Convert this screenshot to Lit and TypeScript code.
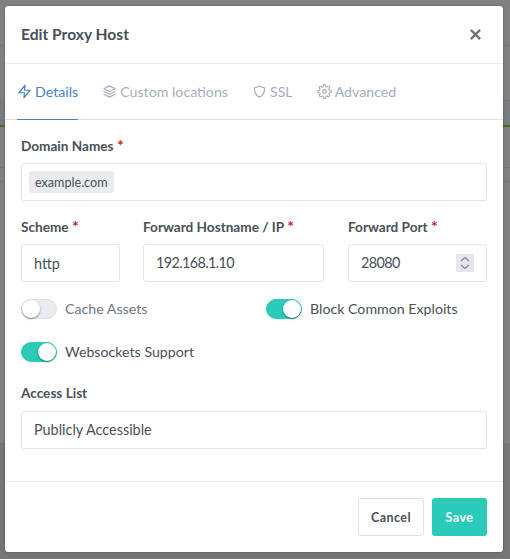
import { LitElement, html, css, svg } from "lit";
import { customElement } from "lit/decorators.js";

const ico = (p: unknown) => html`<svg class="ico" viewBox="0 0 24 24" fill="none" stroke="currentColor" stroke-width="2" stroke-linecap="round" stroke-linejoin="round">${p}</svg>`;

@customElement("app-root")
export class AppRoot extends LitElement {
  static styles = css`
    :host {
      display: block; width: 510px; height: 559px; overflow: hidden; box-sizing: border-box;
      padding: 6px 7px 7px 5px;
      font-family: "Lato", "Noto Sans", sans-serif; font-size: 14.2px; color: #495057;
      background-color: #808080;
      background-image:
        linear-gradient(#757575, #757575), linear-gradient(#757575, #757575), linear-gradient(#4a6b1c, #4a6b1c),
        linear-gradient(#787b80, #787b80), linear-gradient(#757575, #757575), linear-gradient(#757575, #757575),
        linear-gradient(#767676, #767676);
      background-repeat: no-repeat;
      background-size: 100% 1px, 100% 1px, 100% 2px, 100% 25px, 100% 1px, 100% 1px, 100% 116px;
      background-position: 0 45px, 0 100px, 0 125px, 0 100px, 0 167px, 0 181px, 0 443px;
    }
    .modal { height: 546px; background: #fff; border-radius: 3px; display: flex; flex-direction: column; box-shadow: 0 0 2px rgba(0,0,0,.45); }
    .head { border-bottom: 1px solid #e9ecef; display: flex; align-items: center; justify-content: space-between; padding: 0 21px 1px 16px; box-sizing: content-box; flex: none; height: 56px; }
    .title { font-weight: 700; font-size: 15.6px; color: #495057; }
    .close { width: 13px; height: 13px; color: #6e7277; display: block; }
    .tabs { height: 56px; border-bottom: 1px solid #e0e3e6; display: flex; gap: 24px; padding: 0 12px; flex: none; box-sizing: border-box; }
    .tab { display: flex; align-items: center; gap: 3px; color: #a4adbb; margin-bottom: -1px; border-bottom: 1px solid transparent; }
    .tab.on { color: #467fcf; border-bottom-color: #467fcf; }
    .ico { width: 15px; height: 15px; stroke-width: 1.9; flex: none; }
    .body { flex: 1; padding: 16px 16px 0; display: flex; flex-direction: column; min-height: 0; }
    label.lab { display: block; font-weight: 700; font-size: 13.6px; color: #495057; margin-bottom: 7px; line-height: 20px; }
    label.lab.wide { margin-bottom: 8px; }
    .req { color: #cd201f; font-size: 16px; line-height: 1; }
    .field { height: 38px; border: 1px solid #e0e5ec; border-radius: 3px; box-sizing: border-box; display: flex; align-items: center; padding: 0 12px; color: #495057; background: #fff; font-size: 14.4px; }
    .txt { padding-bottom: 2px; }
    .num { letter-spacing: -.6px; }
    .chip { background: #e9ecef; border-radius: 3px; font-size: 12.6px; padding: 0 6px; height: 22px; display: flex; align-items: center; margin-left: -5px; }
    .tall { margin-bottom: 16px; }
    .grid { display: grid; grid-template-columns: 99px 181px 1fr; gap: 0 23px; margin-bottom: 12px; }
    .port { margin-left: 1px; }
    .spin { margin-left: auto; width: 18px; height: 18px; background: #e6e6eb; display: block; }
    .row { display: grid; grid-template-columns: 245px 1fr; height: 30px; margin-bottom: 13px; align-items: center; }
    .row.last { margin-bottom: 16px; }
    .opt { display: flex; align-items: center; gap: 8px; color: #495057; }
    .opt.off { color: #6e7687; }
    .sw { width: 36px; height: 20px; border-radius: 10px; box-sizing: border-box; background: #e9ecef; border: 1px solid #dee2e6; position: relative; flex: none; }
    .sw::after { content: ""; position: absolute; top: 0; left: 0; width: 18px; height: 18px; border-radius: 50%; background: #fff; box-shadow: 0 1px 2px rgba(0,0,0,.45); }
    .sw.on { background: #2bcbba; border-color: #2bcbba; }
    .sw.on::after { left: 16px; }
    .foot { height: 71px; flex: none; border-top: 1px solid #e9ecef; display: flex; justify-content: flex-end; align-items: flex-start; gap: 8px; padding: 16px 16px 0; box-sizing: border-box; }
    .btn { height: 38px; border-radius: 3px; box-sizing: border-box; font-weight: 700; font-size: 12.5px; display: flex; align-items: center; justify-content: center; letter-spacing: .45px; }
    .cancel { width: 66px; border: 1px solid #dfe2e8; color: #495057; background: #fff; }
    .save { width: 55px; background: #2bcbba; color: #fff; }
  `;
  render() {
    return html`
      <div class="modal">
        <div class="head">
          <div class="title">Edit Proxy Host</div>
          <svg class="close" viewBox="0 0 14 14" fill="none" stroke="currentColor" stroke-width="2.4"><path d="M2 2l10 10M12 2L2 12"/></svg>
        </div>
        <div class="tabs">
          <div class="tab on">${ico(svg`<path d="M13 2 3 14h9l-1 8 10-12h-9l1-8z"/>`)}Details</div>
          <div class="tab">${ico(svg`<path d="M12 3 3 7.500l9 4.500 9-4.500L12 3z"/><path d="m3 16.500 9 4.500 9-4.500"/><path d="m3 12 9 4.500 9-4.500"/>`)}Custom locations</div>
          <div class="tab">${ico(svg`<path d="M12 3c2.500 2 5.500 3 8 3 .5 7-2.500 12.500-8 15-5.500-2.500-8.500-8-8-15 2.500 0 5.500-1 8-3z"/>`)}SSL</div>
          <div class="tab">${ico(svg`<circle cx="12" cy="12" r="3"/><path d="M19.4 15a1.65 1.65 0 0 0 .33 1.82l.06.06a2 2 0 1 1-2.83 2.83l-.06-.06a1.65 1.65 0 0 0-2.82 1.17V21a2 2 0 1 1-4 0v-.09a1.65 1.65 0 0 0-2.82-1.17l-.06.06a2 2 0 1 1-2.83-2.83l.06-.06a1.65 1.65 0 0 0-1.17-2.82H3a2 2 0 1 1 0-4h.09a1.65 1.65 0 0 0 1.17-2.82l-.06-.06a2 2 0 1 1 2.83-2.83l.06.06A1.65 1.65 0 0 0 9.91 3.09V3a2 2 0 1 1 4 0v.09a1.65 1.65 0 0 0 2.82 1.17l.06-.06a2 2 0 1 1 2.83 2.83l-.06.06a1.65 1.65 0 0 0 1.17 2.82H21a2 2 0 1 1 0 4h-.09a1.65 1.65 0 0 0-1.51 1z"/>`)}Advanced</div>
        </div>
        <div class="body">
          <label class="lab">Domain Names <span class="req">*</span></label>
          <div class="field tall"><span class="chip">example.com</span></div>
          <div class="grid">
            <div><label class="lab">Scheme <span class="req">*</span></label><div class="field">http</div></div>
            <div><label class="lab">Forward Hostname / IP <span class="req">*</span></label><div class="field num"><span class="txt">192.168.1.10</span></div></div>
            <div class="port"><label class="lab">Forward Port <span class="req">*</span></label><div class="field num"><span class="txt">28080</span><svg class="spin" viewBox="0 0 18 18" fill="none" stroke="#85888f" stroke-width="1.3"><path d="M5 7l4-3.500 4 3.500M5 11l4 3.500 4-3.500"/></svg></div></div>
          </div>
          <div class="row">
            <div class="opt off"><span class="sw"></span><span class="txt">Cache Assets</span></div>
            <div class="opt"><span class="sw on"></span><span class="txt">Block Common Exploits</span></div>
          </div>
          <div class="row last">
            <div class="opt"><span class="sw on"></span><span class="txt">Websockets Support</span></div>
          </div>
          <label class="lab wide">Access List</label>
          <div class="field"><span class="txt">Publicly Accessible</span></div>
        </div>
        <div class="foot">
          <div class="btn cancel">Cancel</div>
          <div class="btn save">Save</div>
        </div>
      </div>
    `;
  }
}
